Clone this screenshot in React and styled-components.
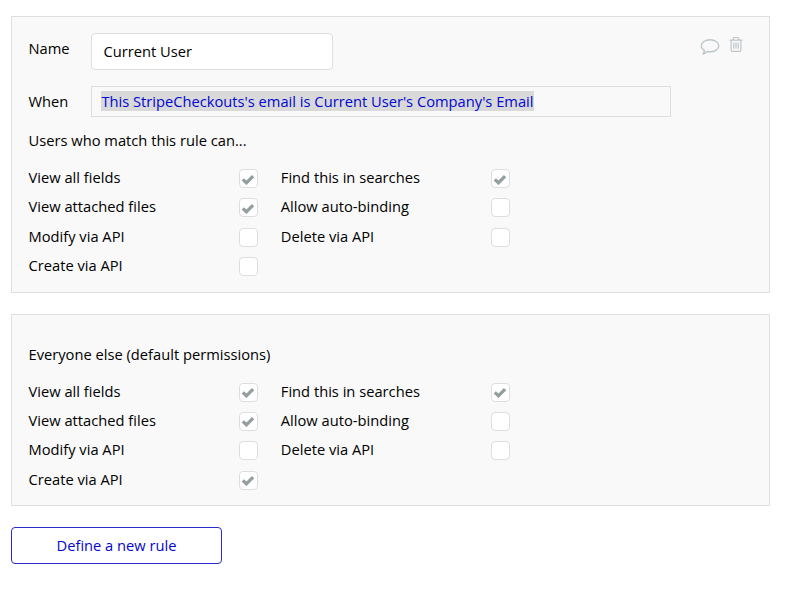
import React from "react";
import styled, { createGlobalStyle } from "styled-components";

const GlobalStyle = createGlobalStyle`
  * { box-sizing: border-box; }
  body {
    margin: 0;
    background: #fff;
    color: #000;
    font-family: "Open Sans", "Noto Sans", sans-serif;
    font-size: 14.7px;
    line-height: 20px;
  }
`;

const Page = styled.main`
  display: flex;
  flex-direction: column;
  align-items: flex-start;
  width: 800px;
  height: 590px;
  padding: 16px 0 0 11px;
`;

const Card = styled.section`
  width: 759px;
  height: ${(p) => p.$height}px;
  margin-bottom: ${(p) => p.$gap}px;
  padding: ${(p) => p.$top}px 16px 0 16.5px;
  border: 1px solid #dfdfdf;
  background: #f9f9f9;
`;

const FieldRow = styled.div`
  display: flex;
  align-items: flex-start;
  height: ${(p) => p.$height}px;
`;

const FieldLabel = styled.label`
  width: 62.9px;
  padding-top: ${(p) => p.$top}px;
`;

const NameInput = styled.input`
  width: 242px;
  height: 37px;
  padding: 0 11px 1px;
  border: 1px solid #dedede;
  border-radius: 4px;
  background: #fff;
  color: #000;
  font: inherit;
  outline: none;
`;

const ConditionBox = styled.div`
  width: 580px;
  height: 31px;
  padding: 4px 9px;
  border: 1px solid #dedede;
  white-space: nowrap;
`;

const Expression = styled.span`
  display: block;
  width: max-content;
  height: 20px;
  background: #d9d9d9;
  color: #0205d3;
  line-height: 20px;
`;

const Actions = styled.div`
  display: flex;
  margin: 3px 10px 0 auto;
  gap: 9px;
`;

const Heading = styled.p`
  height: ${(p) => p.$height}px;
  margin: 0;
`;

const Permissions = styled.div`
  display: grid;
  grid-template-columns: 252.3px 252.3px;
  grid-auto-rows: 29.4px;
`;

const Permission = styled.div`
  display: flex;
  grid-column: ${(p) => p.$column};
  grid-row: ${(p) => p.$row};
`;

const PermissionLabel = styled.span`
  width: 210.1px;
`;

const Box = styled.span`
  display: flex;
  align-items: center;
  justify-content: center;
  width: 19px;
  height: 19px;
  margin-top: 2px;
  border: 1px solid #dedede;
  border-radius: 4px;
  background: #fff;
`;

const RuleButton = styled.button`
  width: 211px;
  height: 37px;
  padding: 0 0 2px;
  border: 1px solid #2b2bd0;
  border-radius: 4px;
  background: #fff;
  color: #0205d3;
  font: inherit;
`;

const CheckMark = () => (
  <svg width="14" height="12" viewBox="0 0 14 12">
    <path d="M1.8 6.4 5.4 9.8 12.1 3.1" fill="none" stroke="#959e9e" strokeWidth="3.3" />
  </svg>
);

const CommentIcon = () => (
  <svg width="20" height="20" viewBox="0 0 20 20" fill="none" stroke="#bdc6ca" strokeWidth="1.4">
    <path d="M4.4 14.3C2.3 13.2 1.2 11.6 1.2 9.8 1.2 6.4 5.1 3.7 10 3.7s8.8 2.7 8.8 6.1-3.9 6-8.8 6c-1 0-1.9-.1-2.8-.3-1.2 1.3-2.7 2.2-4.2 2.5.9-1 1.4-2.2 1.4-3.7Z" strokeLinejoin="round" />
  </svg>
);

const TrashIcon = () => (
  <svg width="14" height="18" viewBox="0 0 14 18" fill="none" stroke="#bdc6ca" strokeWidth="1.2">
    <path d="M.5 4.2h13M4.3 4V2.6c0-.7.5-1.1 1.1-1.1h3.2c.6 0 1.1.4 1.1 1.1V4M2.1 4.3v9.8c0 .8.5 1.3 1.3 1.3h7.2c.8 0 1.3-.5 1.3-1.3V4.3M4.8 6.5v6.2M7 6.5v6.2M9.2 6.5v6.2" />
  </svg>
);

const PERMISSIONS = [
  ["View all fields", 1, 1],
  ["View attached files", 1, 2],
  ["Modify via API", 1, 3],
  ["Create via API", 1, 4],
  ["Find this in searches", 2, 1],
  ["Allow auto-binding", 2, 2],
  ["Delete via API", 2, 3],
];

function PermissionGrid({ granted }) {
  return (
    <Permissions>
      {PERMISSIONS.map(([label, column, row]) => (
        <Permission key={label} $column={column} $row={row}>
          <PermissionLabel>{label}</PermissionLabel>
          <Box role="checkbox" aria-label={label} aria-checked={granted.includes(label)}>
            {granted.includes(label) && <CheckMark />}
          </Box>
        </Permission>
      ))}
    </Permissions>
  );
}

const USER_RULE = ["View all fields", "View attached files", "Find this in searches"];
const DEFAULT_RULE = [...USER_RULE, "Create via API"];

export default function App() {
  return (
    <Page>
      <GlobalStyle />
      <Card $height={277} $gap={21} $top={16}>
        <FieldRow $height={53}>
          <FieldLabel htmlFor="rule-name" $top={5}>Name</FieldLabel>
          <NameInput id="rule-name" defaultValue="Current User" />
          <Actions>
            <CommentIcon />
            <TrashIcon />
          </Actions>
        </FieldRow>
        <FieldRow $height={44}>
          <FieldLabel as="span" $top={5}>When</FieldLabel>
          <ConditionBox>
            <Expression>This StripeCheckouts's email is Current User's Company's Email</Expression>
          </ConditionBox>
        </FieldRow>
        <Heading $height={37}>Users who match this rule can...</Heading>
        <PermissionGrid granted={USER_RULE} />
      </Card>
      <Card $height={192} $gap={21} $top={29}>
        <Heading $height={36.6}>Everyone else (default permissions)</Heading>
        <PermissionGrid granted={DEFAULT_RULE} />
      </Card>
      <RuleButton type="button">Define a new rule</RuleButton>
    </Page>
  );
}
